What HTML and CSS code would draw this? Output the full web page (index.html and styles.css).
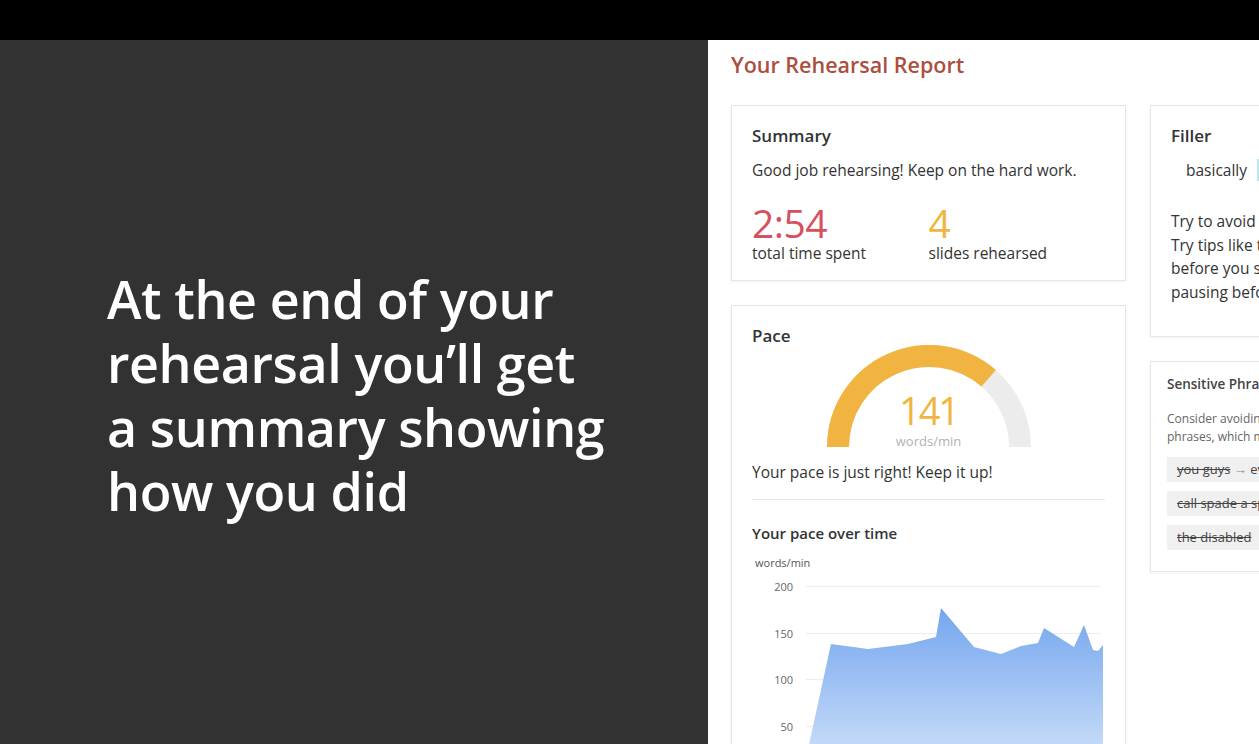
FILE: index.html
```html
<!DOCTYPE html>
<html lang="en">
<head>
    <meta charset="UTF-8">
    <meta name="viewport" content="width=device-width, initial-scale=1.0">
    <title>Rehearsal Report</title>
    <link rel="stylesheet" href="styles.css">
</head>
<body>
    <div class="topbar"></div>
    <div class="stage">
        <div class="intro">
            <p class="intro-text">At the end of your<br>rehearsal you’ll get<br>a summary showing<br>how you did</p>
        </div>

        <div class="report">
            <h1 class="report-title">Your Rehearsal Report</h1>
            <div class="columns">
                <div class="column">
                    <div class="card summary">
                        <h2 class="card-title">Summary</h2>
                        <p class="card-text">Good job rehearsing! Keep on the hard work.</p>
                        <div class="stats">
                            <div class="stat">
                                <div class="stat-value red">2:54</div>
                                <div class="stat-label">total time spent</div>
                            </div>
                            <div class="stat">
                                <div class="stat-value orange">4</div>
                                <div class="stat-label">slides rehearsed</div>
                            </div>
                        </div>
                    </div>

                    <div class="card pace">
                        <h2 class="card-title">Pace</h2>
                        <div class="gauge">
                            <svg width="210" height="105" viewBox="0 0 210 105">
                                <path d="M14 102 A91 91 0 0 1 196 102" fill="none" stroke="#ececec" stroke-width="22"/>
                                <path d="M14 102 A91 91 0 0 1 164.7 33.3" fill="none" stroke="#f2b441" stroke-width="22"/>
                            </svg>
                            <div class="gauge-value">141</div>
                            <div class="gauge-unit">words/min</div>
                        </div>
                        <p class="card-text pace-text">Your pace is just right! Keep it up!</p>
                        <hr class="divider">
                        <h3 class="sub-title">Your pace over time</h3>
                        <div class="axis-unit">words/min</div>
                        <svg class="chart" width="354" height="200" viewBox="0 0 354 200">
                            <defs>
                                <linearGradient id="fill" x1="0" y1="0" x2="0" y2="1">
                                    <stop offset="0" stop-color="#74a6ee"/>
                                    <stop offset="1" stop-color="#d2e3fa"/>
                                </linearGradient>
                            </defs>
                            <g stroke="#ededed" stroke-width="1">
                                <line x1="54" y1="11.5" x2="349" y2="11.5"/>
                                <line x1="54" y1="58.5" x2="349" y2="58.5"/>
                                <line x1="54" y1="104.5" x2="349" y2="104.5"/>
                                <line x1="54" y1="151.5" x2="349" y2="151.5"/>
                            </g>
                            <g class="axis-label" text-anchor="end">
                                <text x="41" y="15.5">200</text>
                                <text x="41" y="62.5">150</text>
                                <text x="41" y="108.5">100</text>
                                <text x="41" y="155.5">50</text>
                            </g>
                            <path d="M51 197 L79 69 L116 74 L156 69 L184 62 L189 33 L222 72 L249 79 L269 71 L286 68 L292 53 L322 72 L332 50 L341 75 L346 76 L351 70 L351 197 Z" fill="url(#fill)"/>
                        </svg>
                    </div>
                </div>

                <div class="column">
                    <div class="card filler">
                        <h2 class="card-title">Filler</h2>
                        <div class="filler-row">
                            <span class="filler-word">basically</span>
                            <span class="filler-bar"></span>
                        </div>
                        <p class="filler-tips">Try to avoid these filler words.<br>Try tips like taking a breath<br>before you start a sentence, or<br>pausing before a new thought.</p>
                    </div>

                    <div class="card sensitive">
                        <h2 class="small-title">Sensitive Phrases</h2>
                        <p class="small-text">Consider avoiding these<br>phrases, which might offend.</p>
                        <div class="chip"><s>you guys</s> <span class="arrow">→</span> everyone</div>
                        <div class="chip"><s>call spade a spade</s></div>
                        <div class="chip"><s>the disabled</s></div>
                    </div>
                </div>
            </div>
        </div>
    </div>
</body>
</html>
```

FILE: styles.css
```css
html, body {
    margin: 0;
    height: 100%;
}
body {
    background: #000;
    font-family: "Open Sans", "Noto Sans", sans-serif;
    overflow: hidden;
    color: #333;
}
.topbar {
    height: 40px;
    background: #000;
}
.stage {
    display: flex;
    height: 704px;
}
.intro {
    width: 601px;
    flex-shrink: 0;
    background: #323232;
    display: flex;
    align-items: center;
    padding-left: 107px;
}
.intro-text {
    margin: 6px 0 0;
    color: #fff;
    font-size: 52px;
    line-height: 64px;
    font-weight: 600;
    letter-spacing: -0.4px;
    white-space: nowrap;
}
.report {
    flex: 1;
    background: #fff;
    padding: 11px 0 0 23px;
    overflow: hidden;
}
.report-title {
    margin: 0 0 26px;
    color: #ab4f40;
    font-size: 21.5px;
    font-weight: 600;
    line-height: 28px;
}
.columns {
    display: flex;
    gap: 24px;
}
.column {
    width: 395px;
    flex-shrink: 0;
    display: flex;
    flex-direction: column;
    gap: 24px;
}
.card {
    border: 1px solid #e6e6e6;
    box-shadow: 0 1px 3px rgba(0, 0, 0, 0.06);
    padding: 18px 20px 0;
    box-sizing: border-box;
}
.card-title {
    margin: 0;
    font-size: 17px;
    font-weight: 600;
    line-height: 24px;
    color: #333;
}
.card-text {
    margin: 12px 0 0;
    font-size: 15.5px;
    line-height: 20px;
}
.summary {
    height: 176px;
}
.stats {
    display: flex;
    margin-top: 23px;
}
.stat {
    width: 180px;
}
.stat-value {
    font-size: 39px;
    line-height: 40px;
    letter-spacing: -0.5px;
}
.red {
    color: #d6505f;
}
.orange {
    color: #f0b540;
}
.stat-label {
    font-size: 15.5px;
    line-height: 20px;
}
.pace {
    height: 460px;
}
.gauge {
    position: relative;
    width: 210px;
    margin: -3px auto 0;
}
.gauge svg {
    display: block;
}
.gauge-value {
    position: absolute;
    left: 0;
    right: 0;
    top: 45px;
    text-align: center;
    font-size: 38px;
    line-height: 40px;
    letter-spacing: -2px;
    color: #f0b540;
}
.gauge-unit {
    position: absolute;
    left: 0;
    right: 0;
    top: 88px;
    text-align: center;
    font-size: 13px;
    line-height: 16px;
    color: #b2b2b2;
}
.pace-text {
    margin-top: 12px;
}
.divider {
    border: 0;
    border-top: 1px solid #e8e8e8;
    margin: 17px 0 0;
}
.sub-title {
    margin: 23px 0 0;
    font-size: 15px;
    font-weight: 600;
    line-height: 20px;
}
.axis-unit {
    margin: 13px 0 0 3px;
    font-size: 11px;
    line-height: 14px;
    color: #555;
}
.chart {
    display: block;
    margin-top: 5px;
}
.axis-label {
    font-family: "Open Sans", "Noto Sans", sans-serif;
    font-size: 11px;
    fill: #666;
}
.filler {
    height: 232px;
}
.filler-row {
    display: flex;
    align-items: center;
    gap: 10px;
    margin: 10px 0 0 15px;
}
.filler-word {
    font-size: 15.5px;
    line-height: 24px;
}
.filler-bar {
    width: 120px;
    height: 22px;
    background: #bfe6e8;
}
.filler-tips {
    margin: 28px 0 0;
    font-size: 15.5px;
    line-height: 23.5px;
    white-space: nowrap;
}
.sensitive {
    height: 211px;
    padding: 12px 16px 0;
}
.small-title {
    margin: 0;
    font-size: 13.5px;
    font-weight: 600;
    line-height: 20px;
    color: #444;
}
.small-text {
    margin: 16px 0 11px;
    font-size: 12px;
    line-height: 18px;
    color: #666;
    white-space: nowrap;
}
.chip {
    background: #f0f0f0;
    height: 25px;
    line-height: 25px;
    padding: 0 10px;
    margin-bottom: 9px;
    font-size: 13px;
    color: #444;
    white-space: nowrap;
}
.arrow {
    color: #888;
}
```
